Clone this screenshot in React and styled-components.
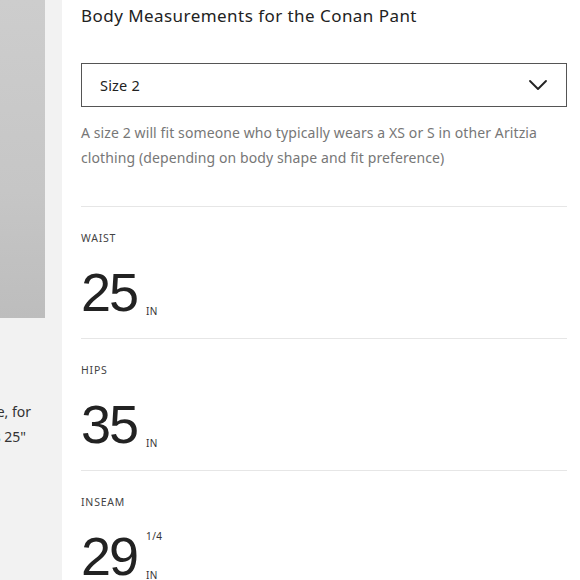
import React from "react"
import styled, { createGlobalStyle } from "styled-components"
import { ChevronDown } from "lucide-react"

const GlobalStyle = createGlobalStyle`
  html, body {
    margin: 0;
    padding: 0;
    background: #f2f2f2;
  }
  body {
    font-family: "Noto Sans", "Open Sans", sans-serif;
    -webkit-font-smoothing: antialiased;
  }
`

const Page = styled.div`
  display: flex;
  width: 580px;
  height: 580px;
  overflow: hidden;
`

const Sidebar = styled.div`
  width: 62px;
  flex-shrink: 0;
  background: #f2f2f2;
  display: flex;
  flex-direction: column;
  overflow: hidden;
`

const Photo = styled.div`
  width: 45px;
  height: 318px;
  flex-shrink: 0;
  background: linear-gradient(180deg, #cdcdcd 0%, #c6c6c6 60%, #bdbdbd 100%);
`

const Caption = styled.div`
  margin-top: 81px;
  width: 31px;
  display: flex;
  flex-direction: column;
  align-items: flex-end;
  font-size: 14px;
  line-height: 25px;
  color: #333;
`

const CaptionLine = styled.span`
  white-space: nowrap;
  padding-right: ${p => p.$trim || 0}px;
`

const Panel = styled.div`
  flex: 1;
  background: #fff;
  padding: 4px 13px 0 19px;
  display: flex;
  flex-direction: column;
  overflow: hidden;
`

const Title = styled.h2`
  margin: 0;
  font-size: 17px;
  line-height: 24px;
  font-weight: 400;
  letter-spacing: 0.45px;
  color: #222;
`

const Select = styled.div`
  margin-top: 35px;
  height: 44px;
  flex-shrink: 0;
  box-sizing: border-box;
  border: 1.5px solid #555;
  display: flex;
  align-items: center;
  justify-content: space-between;
  padding: 0 12px 0 18px;
  font-size: 14.5px;
  letter-spacing: 0.2px;
  color: #222;
`

const Description = styled.p`
  margin: 13px 0 36px;
  font-size: 14px;
  line-height: 25px;
  letter-spacing: 0.1px;
  color: #777;
`

const Section = styled.div`
  border-top: 1px solid #e6e6e6;
  height: 132px;
  flex-shrink: 0;
  box-sizing: border-box;
  padding-top: 24px;
`

const Label = styled.div`
  font-size: 10.5px;
  line-height: 14px;
  letter-spacing: 0.8px;
  color: #444;
`

const Measure = styled.div`
  margin-top: 20px;
  display: flex;
  align-items: flex-end;
`

const Number = styled.span`
  font-family: "Liberation Sans", Arial, sans-serif;
  font-size: 54px;
  line-height: 54px;
  letter-spacing: -2px;
  color: #222;
`

const Units = styled.span`
  margin-left: 9px;
  display: flex;
  flex-direction: column;
  justify-content: space-between;
  align-self: stretch;
  padding: 2px 0 3px;
  font-size: 10px;
  line-height: 10px;
  letter-spacing: 0.4px;
  color: #333;
`

const measurements = [
  { label: "WAIST", value: "25" },
  { label: "HIPS", value: "35" },
  { label: "INSEAM", value: "29", fraction: "1/4" },
]

export default function App() {
  return (
    <Page>
      <GlobalStyle />
      <Sidebar>
        <Photo />
        <Caption>
          <CaptionLine>size, for</CaptionLine>
          <CaptionLine $trim={5}>is 25"</CaptionLine>
        </Caption>
      </Sidebar>
      <Panel>
        <Title>Body Measurements for the Conan Pant</Title>
        <Select>
          Size 2
          <ChevronDown size={32} strokeWidth={1.4} color="#222" />
        </Select>
        <Description>
          A size 2 will fit someone who typically wears a XS or S in other Aritzia
          clothing (depending on body shape and fit preference)
        </Description>
        {measurements.map(m => (
          <Section key={m.label}>
            <Label>{m.label}</Label>
            <Measure>
              <Number>{m.value}</Number>
              <Units>
                <span>{m.fraction || ""}</span>
                <span>IN</span>
              </Units>
            </Measure>
          </Section>
        ))}
      </Panel>
    </Page>
  )
}
